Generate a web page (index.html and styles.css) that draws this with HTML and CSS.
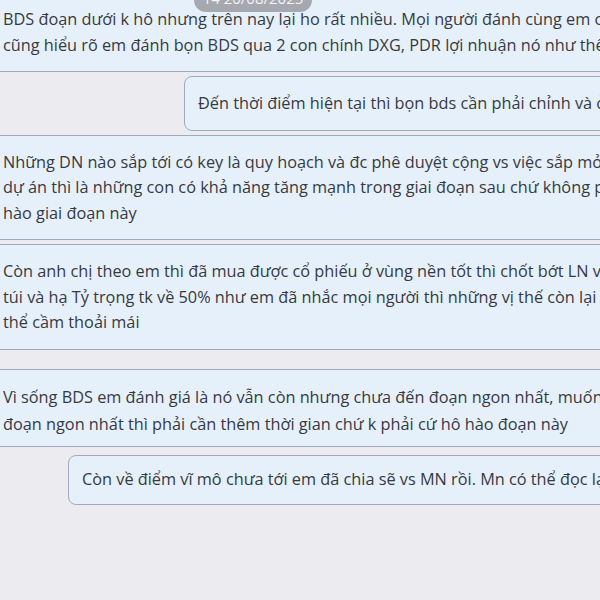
FILE: index.html
```html
<!DOCTYPE html>
<html lang="vi">
<head>
    <meta charset="UTF-8">
    <meta name="viewport" content="width=device-width, initial-scale=1.0">
    <title>Chat</title>
    <link rel="stylesheet" href="styles.css">
</head>
<body>
    <div class="chat">
        <div class="date-pill">14 20/08/2025</div>

        <div class="bubble incoming first">
            <p>BDS đoạn dưới k hô nhưng trên nay lại ho rất nhiều. Mọi người đánh cùng em chắc<br>
            cũng hiểu rõ em đánh bọn BDS qua 2 con chính DXG, PDR lợi nhuận nó như thế nào</p>
        </div>

        <div class="bubble outgoing out-1">
            <p>Đến thời điểm hiện tại thì bọn bds cần phải chỉnh và ở đây</p>
        </div>

        <div class="bubble incoming">
            <p>Những DN nào sắp tới có key là quy hoạch và đc phê duyệt cộng vs việc sắp mở<br>
            dự án thì là những con có khả năng tăng mạnh trong giai đoạn sau chứ không phải<br>
            hào giai đoạn này</p>
        </div>

        <div class="bubble incoming">
            <p>Còn anh chị theo em thì đã mua được cổ phiếu ở vùng nền tốt thì chốt bớt LN về<br>
            túi và hạ Tỷ trọng tk về 50% như em đã nhắc mọi người thì những vị thế còn lại thì<br>
            thể cầm thoải mái</p>
        </div>

        <div class="bubble incoming spaced">
            <p>Vì sống BDS em đánh giá là nó vẫn còn nhưng chưa đến đoạn ngon nhất, muốn<br>
            đoạn ngon nhất thì phải cần thêm thời gian chứ k phải cứ hô hào đoạn này</p>
        </div>

        <div class="bubble outgoing out-2">
            <p>Còn về điểm vĩ mô chưa tới em đã chia sẽ vs MN rồi. Mn có thể đọc lại nhé</p>
        </div>
    </div>
</body>
</html>
```

FILE: styles.css
```css
body {
    background-color: #ecebef;
    color: #363a40;
    font-family: 'Open Sans', Lato, sans-serif;
    margin: 0;
    width: 600px;
    height: 600px;
    overflow: hidden;
}

/* Message list */
.chat {
    display: flex;
    flex-direction: column;
    gap: 4px;
    position: relative;
}

.date-pill {
    position: absolute;
    top: -15px;
    left: 194px;
    width: 118px;
    padding: 3px 0 4px;
    text-align: center;
    color: #f4f4f6;
    font-size: 15px;
    background-color: rgba(150, 150, 156, 0.8);
    border-radius: 12px;
    z-index: 2;
}

/* Bubbles */
.bubble {
    background-color: #e6f0fb;
    border: 1.5px solid #9eabbd;
    border-radius: 8px;
    white-space: nowrap;
}

.bubble p {
    margin: 0;
    font-size: 16.3px;
    line-height: 25.5px;
}

.incoming {
    margin-left: -12px;
    width: 760px;
    padding: 14px 0 13px 14px;
}

.incoming.first {
    margin-top: -8px;
}

.incoming.spaced {
    margin-top: 15px;
    padding-top: 14px;
    padding-bottom: 7px;
}

.incoming.spaced p {
    line-height: 27.5px;
}

.outgoing {
    width: 760px;
    padding: 14px 0 13px 13px;
}

.out-1 {
    margin-left: 184px;
}

.out-2 {
    margin-top: 4px;
    margin-left: 68px;
    padding-top: 11px;
    padding-bottom: 12px;
}
```
